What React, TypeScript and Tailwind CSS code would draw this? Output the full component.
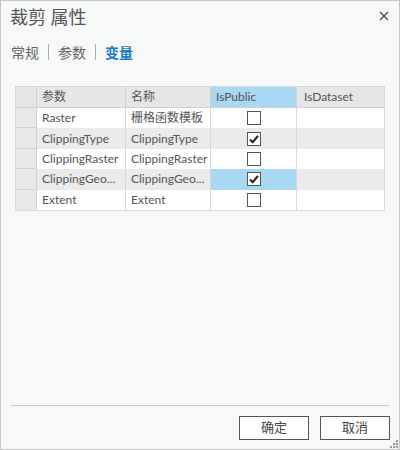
import React from 'react';

type Row = { param: string; name: string; isPublic: boolean; selected?: boolean };

const rows: Row[] = [
  { param: 'Raster', name: '栅格函数模板', isPublic: false },
  { param: 'ClippingType', name: 'ClippingType', isPublic: true },
  { param: 'ClippingRaster', name: 'ClippingRaster', isPublic: false },
  { param: 'ClippingGeo...', name: 'ClippingGeo...', isPublic: true, selected: true },
  { param: 'Extent', name: 'Extent', isPublic: false },
];

const font = { fontFamily: 'Lato, "Noto Sans CJK SC", sans-serif' };

const CheckBox = ({ checked }: { checked: boolean }) => (
  <div className="w-[14px] h-[14px] border border-[#555] bg-white flex items-center justify-center">
    {checked && (
      <svg width="12" height="12" viewBox="0 0 12 12">
        <path d="M2 6.5 L4.7 9.2 L10 2.8" fill="none" stroke="#222" strokeWidth="2" />
      </svg>
    )}
  </div>
);

export default function App() {
  return (
    <div
      className="w-[400px] h-[450px] bg-[#f7f8f8] border border-[#c6c6c6] flex flex-col text-[#444]"
      style={font}
    >
      {/* title bar */}
      <div className="flex items-center justify-between h-[34px] pl-[9px] pr-[10px]">
        <span className="text-[18px] text-[#555] leading-none mt-[-2px]">裁剪 属性</span>
        <svg width="10" height="10" viewBox="0 0 10 10" className="mt-[-4px]">
          <path d="M1 1 L9 9 M9 1 L1 9" stroke="#555" strokeWidth="1.5" />
        </svg>
      </div>

      {/* tabs */}
      <div className="flex items-center h-[34px] pl-[10px] text-[14px]">
        <span className="text-[#666]">常规</span>
        <span className="w-px h-[16px] bg-[#aaa] mx-[9px]" />
        <span className="text-[#666]">参数</span>
        <span className="w-px h-[16px] bg-[#aaa] mx-[9px]" />
        <span className="text-[#1a7ac6] font-bold">变量</span>
      </div>

      {/* variables grid */}
      <div className="ml-[14px] mt-[17px] w-[370px] border border-[#d8d8d8] bg-white text-[12px] text-[#555]">
        <div className="flex h-[21px] bg-[#e6e6e6] border-b border-[#d0d0d0]">
          <div className="w-[21px] border-r border-[#d0d0d0]" />
          <div className="w-[89px] border-r border-[#d0d0d0] pl-[5px] flex items-center">参数</div>
          <div className="w-[85px] border-r border-[#d0d0d0] pl-[5px] flex items-center">名称</div>
          <div className="w-[86px] border-r border-[#d0d0d0] pl-[5px] flex items-center bg-[#a9d8f2]">IsPublic</div>
          <div className="flex-1 pl-[7px] flex items-center">IsDataset</div>
        </div>
        {rows.map((r, i) => (
          <div
            key={r.param}
            className={`flex h-[20.4px] ${i % 2 === 1 ? 'bg-[#ebebeb]' : 'bg-white'}`}
          >
            <div className={`w-[21px] border-r border-[#d0d0d0] bg-[#e8e8e8] ${i < rows.length - 1 ? 'border-b' : ''}`} />
            <div className="w-[89px] border-r border-[#d8d8d8] pl-[5px] flex items-center whitespace-nowrap overflow-hidden">{r.param}</div>
            <div className="w-[85px] border-r border-[#d8d8d8] pl-[5px] flex items-center whitespace-nowrap overflow-hidden">{r.name}</div>
            <div
              className={`w-[86px] border-r border-[#d8d8d8] flex items-center justify-center ${r.selected ? 'bg-[#a9d8f2]' : ''}`}
            >
              <CheckBox checked={r.isPublic} />
            </div>
            <div className="flex-1" />
          </div>
        ))}
      </div>

      <div className="flex-1" />

      {/* footer */}
      <div className="mx-[10px] h-px bg-[#c8c8c8]" />
      <div className="flex justify-end gap-[11px] pr-[9px] pt-[10px] pb-[9px] relative">
        <button className="w-[70px] h-[24px] border border-[#555] bg-white text-[13px] text-[#444]">确定</button>
        <button className="w-[70px] h-[24px] border border-[#555] bg-white text-[13px] text-[#444]">取消</button>
        <svg width="8" height="8" viewBox="0 0 8 8" className="absolute right-[1px] bottom-[1px]">
          <rect x="6" y="0" width="2" height="2" fill="#999" />
          <rect x="3" y="3" width="2" height="2" fill="#999" />
          <rect x="6" y="3" width="2" height="2" fill="#999" />
          <rect x="0" y="6" width="2" height="2" fill="#999" />
          <rect x="3" y="6" width="2" height="2" fill="#999" />
          <rect x="6" y="6" width="2" height="2" fill="#999" />
        </svg>
      </div>
    </div>
  );
}
